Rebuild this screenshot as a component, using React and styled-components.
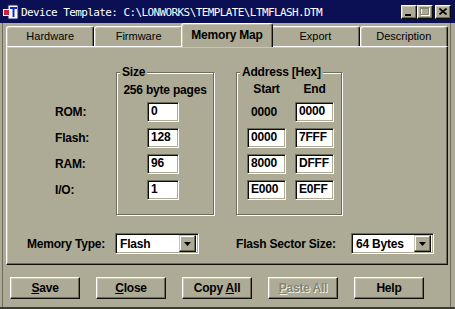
import React from "react";
import styled, { createGlobalStyle } from "styled-components";

const C = {
  face: "#adab96",
  light: "#c8c6b2",
  shadow: "#6c6b5c",
  dark: "#0d0d0a",
  title: "#0b1055",
};

const Global = createGlobalStyle`
  html, body { margin: 0; padding: 0; background: ${C.face}; overflow: hidden; }
  body { font-family: "Liberation Sans", Arial, sans-serif; color: #000; }
  * { box-sizing: border-box; }
`;

const Window = styled.div`
  width: 455px;
  height: 309px;
  display: flex;
  flex-direction: column;
  background:
    linear-gradient(to right, transparent 2px, ${C.shadow} 2px, ${C.shadow} 3px, transparent 3px),
    linear-gradient(to left, transparent 4px, ${C.shadow} 4px, ${C.shadow} 5px, transparent 5px),
    ${C.face};
  box-shadow: inset 0 -2px 0 #3c3b33;
`;

const TitleBar = styled.div`
  height: 23px;
  flex: none;
  display: flex;
  align-items: center;
  background: ${C.title};
  padding: 0 4px 0 3px;
`;

const TitleText = styled.div`
  flex: 1;
  margin-left: 2px;
  color: #fff;
  font-family: "DejaVu Sans Mono", "Liberation Mono", monospace;
  font-size: 11px;
  letter-spacing: -0.6px;
  white-space: nowrap;
  padding-top: 1px;
`;

const Controls = styled.div`
  display: flex;
  align-items: center;
`;

const CtlBtn = styled.div`
  width: 16px;
  height: 14px;
  margin-left: ${(p) => (p.$gap ? "2px" : "0")};
  background: ${C.face};
  border: 1px solid;
  border-color: #fff ${C.dark} ${C.dark} #fff;
  box-shadow: inset -1px -1px 0 ${C.shadow}, inset 1px 1px 0 ${C.light};
  display: flex;
  align-items: center;
  justify-content: center;
`;

const TabStrip = styled.div`
  height: 23px;
  flex: none;
  margin: 0 7px 0 6px;
  display: grid;
  grid-template-columns: repeat(5, 1fr);
  align-items: end;
`;

const Tab = styled.div`
  position: relative;
  z-index: ${(p) => (p.$active ? 2 : 0)};
  height: ${(p) => (p.$active ? "24px" : "20px")};
  margin: ${(p) => (p.$active ? "0 -2px -1px -2px" : "0")};
  background: ${C.face};
  border-top: 1px solid #fff;
  border-left: 1px solid #fff;
  border-right: 1px solid ${C.dark};
  border-radius: 3px 3px 0 0;
  box-shadow: inset -1px 0 0 ${C.shadow}, inset 1px 1px 0 ${C.light};
  display: flex;
  align-items: center;
  justify-content: center;
  padding-bottom: ${(p) => (p.$active ? "2px" : "1px")};
  font-size: ${(p) => (p.$active ? "12px" : "11px")};
  font-weight: ${(p) => (p.$active ? 700 : 400)};
  letter-spacing: ${(p) => (p.$active ? "-0.2px" : "0")};
`;

const Panel = styled.div`
  position: relative;
  z-index: 1;
  flex: none;
  margin-left: 6px;
  width: 442px;
  height: 219px;
  background: ${C.face};
  border: 1px solid;
  border-color: #fff ${C.dark} ${C.dark} #fff;
  box-shadow: inset -1px -1px 0 ${C.shadow}, inset 1px 1px 0 ${C.light};
  padding: 25px 0 0 20px;
  display: flex;
  flex-direction: column;
`;

const Bold = styled.div`
  font-size: 12px;
  font-weight: 700;
  letter-spacing: -0.2px;
  white-space: nowrap;
`;

const TopRow = styled.div`
  display: flex;
  align-items: flex-start;
`;

const LabelCol = styled.div`
  margin-left: 28px;
  width: 61px;
  padding-top: 30px;
  display: flex;
  flex-direction: column;
  gap: 6px;
`;

const RowLabel = styled(Bold)`
  height: 20px;
  line-height: 20px;
`;

const Group = styled.div`
  position: relative;
  width: ${(p) => p.$w}px;
  height: 143px;
  margin-left: ${(p) => p.$ml || 0}px;
  border: 1px solid ${C.shadow};
  box-shadow: inset 1px 1px 0 #fff, 1px 1px 0 #fff;
`;

const Legend = styled(Bold)`
  position: absolute;
  top: -8px;
  left: 3px;
  padding: 0 2px;
  background: ${C.face};
  line-height: 14px;
`;

const SizeBody = styled.div`
  padding-top: 11px;
  display: flex;
  flex-direction: column;
`;

const GroupHeader = styled(Bold)`
  height: 13px;
  line-height: 13px;
  text-align: center;
`;

const InputStack = styled.div`
  margin: 5px 0 0 30px;
  display: flex;
  flex-direction: column;
  gap: 6px;
`;

const AddrGrid = styled.div`
  padding: 10px 0 0 10px;
  display: grid;
  grid-template-columns: 39px 39px;
  grid-auto-rows: 20px;
  grid-template-rows: 13px;
  column-gap: 9px;
  row-gap: 6px;
`;

const ColHead = styled(Bold)`
  line-height: 13px;
  text-align: center;
`;

const Edit = styled(Bold)`
  width: ${(p) => p.$w}px;
  height: 20px;
  background: #fff;
  border: 1px solid;
  border-color: ${C.shadow} #fff #fff ${C.shadow};
  box-shadow: inset 1px 1px 0 ${C.dark}, inset -1px -1px 0 ${C.face};
  padding-left: 3px;
  line-height: 17px;
`;

const StaticCell = styled(Bold)`
  line-height: 20px;
  padding-left: 4px;
`;

const BottomRow = styled.div`
  margin-top: 18px;
  display: flex;
  align-items: center;
`;

const FieldLabel = styled(Bold)`
  width: ${(p) => p.$w}px;
  margin-left: ${(p) => p.$ml || 0}px;
`;

const ComboBox = styled.div`
  width: ${(p) => p.$w}px;
  height: 21px;
  background: #fff;
  border: 1px solid;
  border-color: ${C.shadow} #fff #fff ${C.shadow};
  box-shadow: inset 1px 1px 0 ${C.dark}, inset -1px -1px 0 ${C.face};
  display: flex;
  align-items: center;
  padding: 2px 2px 2px 4px;
`;

const ComboText = styled(Bold)`
  flex: 1;
  padding-top: 1px;
`;

const ArrowBtn = styled.div`
  width: 17px;
  height: 17px;
  background: ${C.face};
  border: 1px solid;
  border-color: ${C.light} ${C.dark} ${C.dark} ${C.light};
  box-shadow: inset -1px -1px 0 ${C.shadow}, inset 1px 1px 0 #fff;
  display: flex;
  align-items: center;
  justify-content: center;
`;

const ButtonRow = styled.div`
  margin: 12px 0 0 10px;
  display: flex;
  gap: 16px;
`;

const Button = styled.div`
  width: 70px;
  height: 22px;
  background: ${C.face};
  border: 1px solid;
  border-color: #fff ${C.dark} ${C.dark} #fff;
  box-shadow: inset -1px -1px 0 ${C.shadow}, inset 1px 1px 0 ${C.light};
  display: flex;
  align-items: center;
  justify-content: center;
  font-size: 12px;
  font-weight: 700;
  letter-spacing: -0.2px;
  color: ${(p) => (p.$disabled ? "#858472" : "#000")};
  text-shadow: ${(p) => (p.$disabled ? "1px 1px 0 #f4f3ea" : "none")};
`;

const U = styled.span`
  text-decoration: underline;
  text-underline-offset: 1px;
`;

const AppIcon = () => (
  <svg width="16" height="16" viewBox="0 0 16 16">
    <rect x="5" y="1" width="10" height="14" fill="#fff" stroke="#1a1a6a" strokeWidth="1" />
    <rect x="7" y="3" width="7" height="2" fill="#1028c8" />
    <rect x="9.5" y="3" width="2" height="10" fill="#1028c8" />
    <rect x="0.5" y="5.5" width="6" height="6" fill="#d02040" stroke="#fff" strokeWidth="1" />
  </svg>
);

const MinGlyph = () => (
  <svg width="8" height="8" viewBox="0 0 8 8">
    <rect x="0" y="6" width="6" height="2" fill="#000" />
  </svg>
);

const MaxGlyph = () => (
  <svg width="10" height="9" viewBox="0 0 10 9">
    <rect x="1.5" y="1.5" width="8" height="7" fill="none" stroke="#fff" />
    <rect x="1" y="1" width="8" height="1" fill="#fff" />
    <rect x="0.5" y="0.5" width="8" height="7" fill="none" stroke="#858472" />
    <rect x="0" y="0" width="9" height="2" fill="#858472" />
  </svg>
);

const CloseGlyph = () => (
  <svg width="8" height="7" viewBox="0 0 8 7">
    <path d="M0.5 0.5 L7.5 6.5 M7.5 0.5 L0.5 6.5" stroke="#000" strokeWidth="1.6" />
  </svg>
);

const DownArrow = () => (
  <svg width="7" height="4" viewBox="0 0 7 4">
    <path d="M0 0 H7 L3.5 4 Z" fill="#000" />
  </svg>
);

const Combo = ({ w, value }) => (
  <ComboBox $w={w}>
    <ComboText>{value}</ComboText>
    <ArrowBtn>
      <DownArrow />
    </ArrowBtn>
  </ComboBox>
);

const tabs = ["Hardware", "Firmware", "Memory Map", "Export", "Description"];
const rows = [
  { label: "ROM:", size: "0", start: "0000", startStatic: true, end: "0000" },
  { label: "Flash:", size: "128", start: "0000", end: "7FFF" },
  { label: "RAM:", size: "96", start: "8000", end: "DFFF" },
  { label: "I/O:", size: "1", start: "E000", end: "E0FF" },
];

export default function App() {
  return (
    <>
      <Global />
      <Window>
        <TitleBar>
          <AppIcon />
          <TitleText>Device Template: C:\LONWORKS\TEMPLATE\LTMFLASH.DTM</TitleText>
          <Controls>
            <CtlBtn>
              <MinGlyph />
            </CtlBtn>
            <CtlBtn>
              <MaxGlyph />
            </CtlBtn>
            <CtlBtn $gap>
              <CloseGlyph />
            </CtlBtn>
          </Controls>
        </TitleBar>

        <TabStrip>
          {tabs.map((t) => (
            <Tab key={t} $active={t === "Memory Map"}>
              {t}
            </Tab>
          ))}
        </TabStrip>

        <Panel>
          <TopRow>
            <LabelCol>
              {rows.map((r) => (
                <RowLabel key={r.label}>{r.label}</RowLabel>
              ))}
            </LabelCol>
            <Group $w={98}>
              <Legend>Size</Legend>
              <SizeBody>
                <GroupHeader>256 byte pages</GroupHeader>
                <InputStack>
                  {rows.map((r) => (
                    <Edit key={r.label} $w={32}>
                      {r.size}
                    </Edit>
                  ))}
                </InputStack>
              </SizeBody>
            </Group>
            <Group $w={106} $ml={22}>
              <Legend>Address [Hex]</Legend>
              <AddrGrid>
                <ColHead>Start</ColHead>
                <ColHead>End</ColHead>
                {rows.map((r) => (
                  <React.Fragment key={r.label}>
                    {r.startStatic ? (
                      <StaticCell>{r.start}</StaticCell>
                    ) : (
                      <Edit $w={39}>{r.start}</Edit>
                    )}
                    <Edit $w={39}>{r.end}</Edit>
                  </React.Fragment>
                ))}
              </AddrGrid>
            </Group>
          </TopRow>

          <BottomRow>
            <FieldLabel $w={88}>Memory Type:</FieldLabel>
            <Combo w={84} value="Flash" />
            <FieldLabel $w={115} $ml={37}>
              Flash Sector Size:
            </FieldLabel>
            <Combo w={83} value="64 Bytes" />
          </BottomRow>
        </Panel>

        <ButtonRow>
          <Button>
            <span>
              <U>S</U>ave
            </span>
          </Button>
          <Button>
            <span>
              <U>C</U>lose
            </span>
          </Button>
          <Button>
            <span>
              Copy <U>A</U>ll
            </span>
          </Button>
          <Button $disabled>
            <span>
              <U>P</U>aste All
            </span>
          </Button>
          <Button>Help</Button>
        </ButtonRow>
      </Window>
    </>
  );
}
